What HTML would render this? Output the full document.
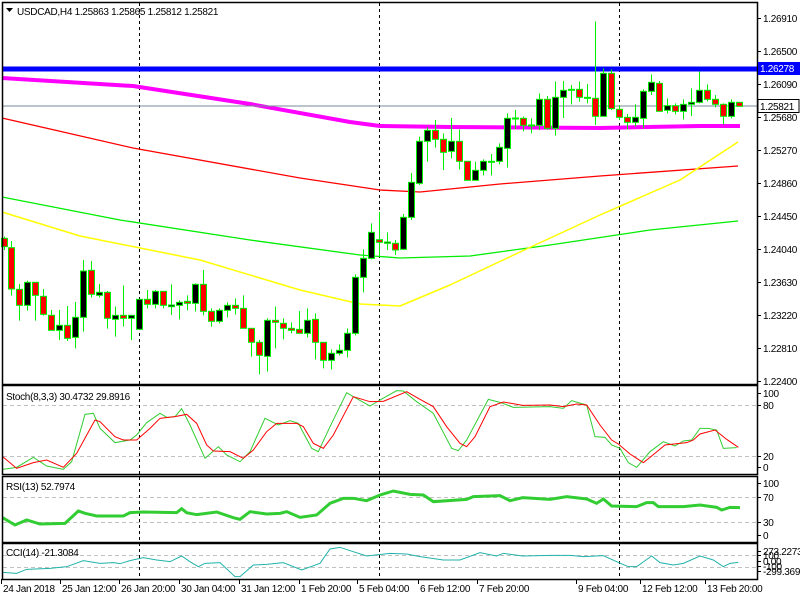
<!DOCTYPE html><html><head><meta charset="utf-8"><style>
body{margin:0;width:800px;height:600px;background:#fff;overflow:hidden;font-family:"Liberation Sans",sans-serif}
svg{position:absolute;left:0;top:0}
text{font-family:"Liberation Sans",sans-serif;font-size:10.5px;fill:#000}
text.s{font-size:10px;letter-spacing:-0.3px}
</style></head><body>
<svg id="s" width="800" height="600" xmlns="http://www.w3.org/2000/svg">
<g id="bg"></g>
<g fill="none" stroke-linejoin="round">
<polyline id="red" stroke="#ff0000" stroke-width="1.3"/>
<polyline id="grn" stroke="#00ee00" stroke-width="1.3"/>
<polyline id="yel" stroke="#ffff00" stroke-width="1.5"/>
<polyline id="mag" stroke="#ff00ff" stroke-width="4"/>
</g>
<line x1="2" y1="106" x2="757" y2="106" stroke="#778899" stroke-width="1"/>
<line x1="2" y1="69" x2="757" y2="69" stroke="#0000ff" stroke-width="5"/>
<g id="cd"></g>
<g id="ind" fill="none"></g>
<g id="frame" fill="none" stroke="#000" stroke-width="1"></g>
<g id="lbl"></g>
</svg>
<script>
var NS="http://www.w3.org/2000/svg";
function el(p,t,a,txt){var e=document.createElementNS(NS,t);for(var k in a)e.setAttribute(k,a[k]);if(txt!=null)e.textContent=txt;document.getElementById(p).appendChild(e);return e;}
function pts(a){return a.map(function(p){return p[0]+","+p[1]}).join(" ");}
document.getElementById('mag').setAttribute('points',pts([[2,78],[133,86],[250,104],[350,122],[380,126],[450,127],[600,128],[700,126],[740,126]]));
document.getElementById('red').setAttribute('points',pts([[2,118],[133,148],[300,178],[380,190],[420,192],[500,184],[600,176],[738,166]]));
document.getElementById('grn').setAttribute('points',pts([[2,197],[120,220],[250,240],[360,255],[400,258],[470,256],[550,245],[650,230],[738,221]]));
document.getElementById('yel').setAttribute('points',pts([[2,212],[80,236],[200,260],[300,290],[360,304],[400,306],[450,285],[520,252],[600,215],[680,180],[738,142]]));
var c3=[[4,175,200,170,210,1],[11,203,327,183,347,1],[19,328,376,312,422,1],[27,307,376,302,392,0],[35,307,346,307,422,1],[43,349,403,327,407,1],[51,406,451,390,451,1],[59,436,451,390,480,0],[67,436,475,378,483,1],[75,412,472,366,505,0],[83,273,412,240,455,0],[91,271,343,243,352,1],[99,337,346,312,352,0],[107,337,415,333,446,1],[115,406,418,380,470,0],[123,406,415,316,440,1],[131,406,415,406,480,0],[139,358,448,358,448,0],[147,358,373,330,385,1],[155,334,373,330,385,0],[163,334,376,334,385,1],[171,375,380,313,405,0],[179,367,376,361,418,0],[187,364,370,346,391,1],[195,313,370,310,394,0],[203,313,394,270,406,1],[211,394,424,385,440,1],[219,391,424,385,430,0],[227,376,391,367,412,0],[235,376,385,355,404,1],[243,385,445,346,445,1],[251,445,487,445,530,1],[259,487,526,480,583,1],[267,421,529,415,575,0],[275,421,427,380,505,1],[283,430,445,415,478,1],[291,445,451,427,460,1],[299,448,460,393,460,1],[307,421,460,385,472,0],[315,418,487,400,538,1],[323,487,541,487,565,1],[331,520,541,508,568,0],[339,511,520,493,526,0],[347,460,511,445,532,0],[355,292,460,283,466,0],[363,235,292,208,337,0]];
var c4=[[371,667,745,640,748,0],[379,689,697,606,740,1],[387,696,700,667,720,0],[395,700,720,690,735,1],[403,622,718,612,720,0],[411,517,622,489,630,0],[419,394,520,380,525,0],[427,361,394,352,455,0],[435,361,388,330,413,1],[443,388,427,370,480,1],[451,394,424,324,445,0],[459,394,454,358,478,1],[467,454,511,454,511,1],[475,481,511,455,511,0],[483,454,481,448,496,0],[491,454,457,432,496,0],[499,412,454,400,463,0],[507,325,415,310,473,0],[515,324,327,300,357,0],[523,325,346,320,364,1],[531,345,348,325,370,0],[539,268,346,250,360,0],[547,268,355,258,358,1],[555,262,355,214,377,0],[563,241,262,213,324,0],[571,238,241,225,283,0],[579,238,262,214,275,1],[587,262,265,222,280,0],[595,265,319,34,345,1],[603,190,319,175,319,0],[611,190,296,178,300,1],[619,298,322,285,330,1],[627,322,337,312,358,1],[635,322,337,283,350,0],[643,244,325,238,355,0],[651,217,244,193,255,0],[659,220,304,213,304,1],[667,287,301,265,310,0],[675,287,304,280,313,1],[683,283,304,268,328,0],[691,277,283,235,318,0],[699,241,277,185,280,0],[707,241,268,223,274,1],[715,268,283,255,292,1],[723,283,319,280,343,1],[731,277,319,268,325,0],[739,277,289,277,289,1]];
function candle(x,bt,bb,wt,wb,r){
 el('cd','line',{x1:x+.5,y1:wt,x2:x+.5,y2:wb,stroke:'#00ee00','stroke-width':1});
 var h=Math.max(bb-bt,1);
 el('cd','rect',{x:x-2.5,y:bt,width:6,height:h,fill:r?'#ff0000':'#000',stroke:'#00ee00','stroke-width':1});
}
c3.forEach(function(c){candle(c[0],180+c[1]/3,180+c[2]/3,180+c[3]/3,180+c[4]/3,c[5]);});
c4.forEach(function(c){candle(c[0],10+c[1]/3,10+c[2]/3,10+c[3]/3,10+c[4]/3,c[5]);});
[405,456,497,522,555,567].forEach(function(y){el('bg','line',{x1:3,y1:y+.5,x2:757,y2:y+.5,stroke:'#c0c0c0','stroke-dasharray':'4,3'});});
[139,379,619].forEach(function(x){el('bg','line',{x1:x+.5,y1:3,x2:x+.5,y2:579,stroke:'#000','stroke-dasharray':'3,3'});});
function z5(a){return a.map(function(p){return [p[0]/3,380+p[1]/3]});}
function z2(a){return a.map(function(p){return [550+p[0]/3,380+p[1]/3]});}
var sg=z5([[8,268],[50,262],[100,232],[140,258],[190,268],[215,245],[255,103],[280,100],[300,145],[345,188],[390,180],[410,165],[440,128],[480,100],[500,112],[525,110],[545,86],[570,135],[615,235],[655,200],[680,225],[720,245],[750,215],[795,115],[835,135],[870,122],[895,130],[935,205],[955,215],[990,140],[1040,38],[1060,50],[1110,78],[1140,60],[1190,32],[1210,33],[1250,65],[1300,100],[1355,205],[1375,212],[1400,180],[1465,58],[1500,67],[1540,82],[1650,80]]).concat(z2([[0,80],[40,85],[65,62],[110,75],[135,170],[165,172],[185,195],[210,205],[235,248],[260,262],[300,215],[340,185],[375,198],[400,183],[425,180],[450,145],[475,145],[500,150],[520,205],[560,203]]));
var sr=z5([[8,230],[50,265],[100,248],[140,240],[190,262],[230,220],[285,120],[300,125],[345,170],[370,180],[410,180],[450,145],[480,115],[525,110],[560,103],[590,130],[620,195],[640,213],[690,215],[730,235],[760,210],[800,155],[830,130],[890,130],[910,140],[940,190],[970,205],[1000,165],[1060,50],[1110,65],[1150,64],[1220,35],[1260,58],[1300,80],[1340,140],[1380,190],[1400,200],[1425,170],[1470,80],[1510,66],[1568,76]]).concat(z2([[0,75],[40,80],[80,72],[110,75],[150,135],[185,180],[205,192],[240,222],[280,248],[300,232],[345,195],[410,188],[430,180],[450,162],[495,150],[530,178],[565,202]]));
var rsi=z5([[8,413],[45,435],[80,420],[120,432],[195,430],[235,393],[255,400],[290,408],[370,408],[390,398],[430,396],[530,398],[545,386],[560,398],[590,404],[650,396],[700,413],[720,418],[750,395],[800,402],[840,400],[860,395],[900,412],[950,405],[990,370],[1030,355],[1060,355],[1100,362],[1140,345],[1180,333],[1230,343],[1270,345],[1300,365],[1400,358],[1420,350],[1500,347],[1530,362],[1568,353]]).concat(z2([[0,358],[50,350],[110,357],[140,370],[160,357],[185,378],[260,380],[290,368],[310,368],[325,380],[400,380],[450,375],[500,382],[515,390],[540,382],[570,383]]));
var cci=z5([[8,577],[50,580],[80,568],[150,565],[200,560],[250,542],[300,550],[340,548],[360,551],[390,542],[430,533],[470,540],[510,545],[545,528],[570,545],[595,560],[615,550],[660,548],[705,590],[720,590],[760,555],[800,553],[850,548],[905,570],[960,550],[990,507],[1020,502],[1060,515],[1100,528],[1170,520],[1220,522],[1260,530],[1330,540],[1380,540],[1440,518],[1490,528],[1510,520],[1568,528]]).concat(z2([[0,526],[60,526],[100,530],[160,527],[200,545],[235,560],[260,560],[305,528],[330,548],[370,555],[400,550],[450,528],[490,540],[520,560],[540,550],[565,547]]));
el('ind','polyline',{points:pts(sg),stroke:'#32cd32','stroke-width':1});
el('ind','polyline',{points:pts(sr),stroke:'#ff0000','stroke-width':1});
el('ind','polyline',{points:pts(rsi),stroke:'#32cd32','stroke-width':3});
el('ind','polyline',{points:pts(cci),stroke:'#20b2aa','stroke-width':1});
[[2.5,2.5,755,382],[2.5,385.5,755,89],[2.5,476.5,755,66],[2.5,543.5,755,36]].forEach(function(r){el('frame','rect',{x:r[0],y:r[1],width:r[2],height:r[3],'stroke-width':1.5});});
var pl=['1.26910','1.26500','1.26090','1.25680','1.25270','1.24860','1.24450','1.24040','1.23630','1.23220','1.22810','1.22400'];
function ax(t,y){el('frame','line',{x1:757,y1:y+.5,x2:761,y2:y+.5});el('lbl','text',{x:763,y:y+4,'class':'s'},t);}
pl.forEach(function(t,i){ax(t,18+i*33);});
ax('100',393);ax('80',405);ax('20',456);ax('0',467);
ax('100',483);ax('70',497);ax('30',522);ax('0',535);
ax('273.2273',551);ax('100',555);ax('0.00',561);ax('-100',566);ax('-299.3698',571);
el('lbl','rect',{x:758,y:62,width:42,height:13,fill:'#0000ff'});
el('lbl','text',{x:760,y:72,'class':'s',style:'fill:#fff'},'1.26278');
el('lbl','rect',{x:758,y:99.5,width:41,height:13,fill:'#fff',stroke:'#000'});
el('lbl','text',{x:760,y:110,'class':'s'},'1.25821');
el('lbl','path',{d:'M6 8 L13 8 L9.5 12 Z',fill:'#000'});
el('lbl','text',{x:17,y:15,'class':'s'},'USDCAD,H4  1.25863 1.25865 1.25812 1.25821');
el('lbl','text',{x:6,y:400,'class':'s'},'Stoch(8,3,3) 30.4732 29.8916');
el('lbl','text',{x:6,y:490,'class':'s'},'RSI(13) 52.7974');
el('lbl','text',{x:6,y:556,'class':'s'},'CCI(14) -21.3084');
var tl=[[3,'24 Jan 2018'],[62,'25 Jan 12:00'],[121,'26 Jan 20:00'],[181,'30 Jan 04:00'],[241,'31 Jan 12:00'],[301,'1 Feb 20:00'],[359,'5 Feb 04:00'],[420,'6 Feb 12:00'],[479,'7 Feb 20:00'],[578,'9 Feb 04:00'],[642,'12 Feb 12:00'],[707,'13 Feb 20:00']];
tl.forEach(function(t){el('frame','line',{x1:t[0]-1.5,y1:579,x2:t[0]-1.5,y2:584});el('lbl','text',{x:t[0],y:592,'class':'s'},t[1]);});
</script>
</body></html>
